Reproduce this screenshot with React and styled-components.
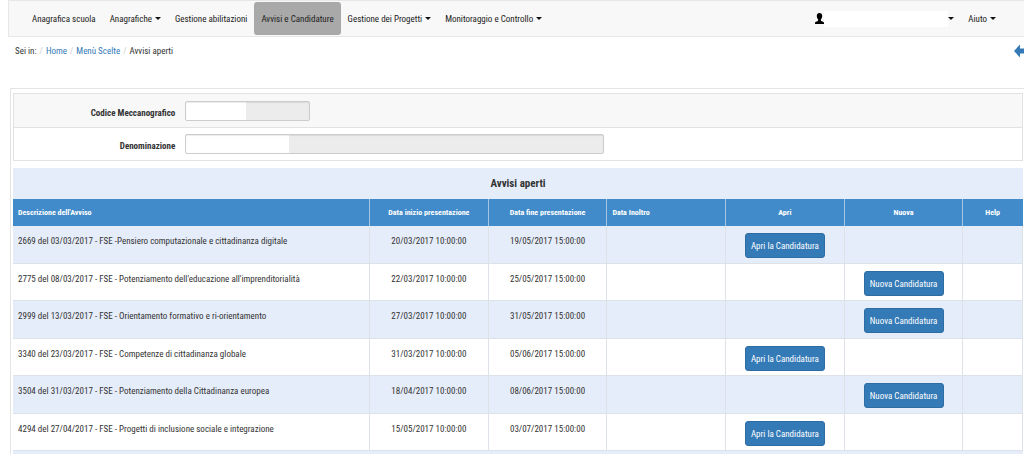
import React from 'react';
import styled, { createGlobalStyle } from 'styled-components';

const GlobalStyle = createGlobalStyle`
  * {
    box-sizing: border-box;
  }

  body {
    margin: 0;
    background: #fff;
    color: #333;
    font-family: 'Roboto Condensed', 'Liberation Sans', Arial, sans-serif;
    font-size: 9px;
    line-height: 14px;
    overflow-x: hidden;
  }

  button,
  input {
    font: inherit;
  }
`;

const NavBar = styled.nav`
  display: flex;
  justify-content: space-between;
  margin-left: 8px;
  padding: 1px 21px 1px 16px;
  background: #f8f8f8;
  border: 1px solid #e7e7e7;
  border-right: 0;
`;

const NavGroup = styled.div`
  display: flex;
  align-items: center;
`;

const navItem = `
  display: flex;
  align-items: center;
  gap: 3px;
  height: 33px;
  padding: 0 7px;
  border: 0;
  border-radius: 3px;
  color: #222;
  text-decoration: none;
  white-space: nowrap;
`;

const NavLink = styled.a`
  ${navItem}
  background: ${({ $active }) => ($active ? '#a9a9a9' : 'transparent')};
`;

const NavButton = styled.button`
  ${navItem}
  background: transparent;
  cursor: pointer;
`;

const Caret = styled.span`
  border-top: 3px solid #111;
  border-left: 3px solid transparent;
  border-right: 3px solid transparent;
`;

const UserButton = styled(NavButton)`
  gap: 0;
`;

const UserName = styled.span`
  width: 124px;
  height: 16px;
  background: #fff;
`;

const BreadcrumbBar = styled.div`
  display: flex;
  justify-content: space-between;
  align-items: center;
  height: 28px;
  padding-left: 15px;
`;

const Breadcrumb = styled.ol`
  display: flex;
  margin: 0;
  padding: 0;
  list-style: none;

  li + li::before {
    content: '/';
    padding: 0 3px;
    color: #ccc;
  }

  a {
    color: #337ab7;
    text-decoration: none;
  }
`;

const BackLink = styled.a`
  display: flex;
  margin-right: -2px;
`;

const Panel = styled.main`
  margin: 23px 0 0 10px;
  padding: 4px 1px 0 2px;
  border: 1px solid #e4e4e4;
  border-right: 0;
  border-bottom: 0;
`;

const Form = styled.form`
  margin-bottom: 7px;
  border: 1px solid #e2e2e2;
`;

const FormRow = styled.div`
  display: grid;
  grid-template-columns: 16% 1fr;
  align-items: center;
  column-gap: 10px;
  height: 33px;
  background: ${({ $shaded }) => ($shaded ? '#f8f8f8' : '#fff')};

  & + & {
    border-top: 1px solid #e2e2e2;
  }
`;

const Label = styled.label`
  padding-top: 4px;
  font-weight: bold;
  text-align: right;
`;

const ReadOnlyInput = styled.input`
  width: ${({ $width }) => $width};
  height: 20px;
  padding: 0 6px;
  border: 1px solid #ccc;
  border-radius: 2px;
  background: linear-gradient(#fff, #fff) no-repeat left / ${({ $blank }) => $blank} 100% #ececec;
  box-shadow: inset 0 1px 1px rgba(0, 0, 0, 0.08);
`;

const Table = styled.table`
  width: 100%;
  table-layout: fixed;
  border-collapse: separate;
  border-spacing: 0;
  border-bottom: 3px solid #e6edfa;
`;

const Caption = styled.caption`
  background: #e6edfa;
  font-size: 11px;
  font-weight: bold;
  line-height: 31px;
`;

const HeadCell = styled.th`
  width: ${({ $width }) => $width};
  height: 27px;
  padding: 0 5px;
  background: #428bca;
  border-right: 1px solid #a5c6e3;
  color: #fff;
  font-size: 8px;
  text-align: ${({ $align }) => $align || 'center'};

  &:last-child {
    border-right-color: #428bca;
  }
`;

const Row = styled.tr`
  height: 38px;
  background: #e6edfa;

  &:nth-child(even) {
    height: 37px;
    background: #fff;
  }
`;

const Cell = styled.td`
  padding: ${({ $action }) => ($action ? '7px 0 0' : '8px 5px 0')};
  border-right: 1px solid #dde1e8;
  border-bottom: 1px solid #dde1e8;
  text-align: ${({ $align }) => $align || 'center'};
  vertical-align: top;
`;

const ActionButton = styled.button`
  display: block;
  width: 80px;
  height: 25px;
  margin: 0 auto;
  padding: 0;
  border: 1px solid #2e6da4;
  border-radius: 3px;
  background: #337ab7;
  color: #fff;
  white-space: nowrap;
  cursor: pointer;
`;

const columns = [
  { label: "Descrizione dell'Avviso", width: '35.35%', align: 'left' },
  { label: 'Data inizio presentazione', width: '11.75%' },
  { label: 'Data fine presentazione', width: '11.75%' },
  { label: 'Data Inoltro', width: '11.75%', align: 'left' },
  { label: 'Apri', width: '11.75%' },
  { label: 'Nuova', width: '11.75%' },
  { label: 'Help', width: 'auto' },
];

const avvisi = [
  { title: '2669 del 03/03/2017 - FSE -Pensiero computazionale e cittadinanza digitale', start: '20/03/2017 10:00:00', end: '19/05/2017 15:00:00', open: true },
  { title: "2775 del 08/03/2017 - FSE - Potenziamento dell'educazione all'imprenditorialità", start: '22/03/2017 10:00:00', end: '25/05/2017 15:00:00', open: false },
  { title: '2999 del 13/03/2017 - FSE - Orientamento formativo e ri-orientamento', start: '27/03/2017 10:00:00', end: '31/05/2017 15:00:00', open: false },
  { title: '3340 del 23/03/2017 - FSE - Competenze di cittadinanza globale', start: '31/03/2017 10:00:00', end: '05/06/2017 15:00:00', open: true },
  { title: '3504 del 31/03/2017 - FSE - Potenziamento della Cittadinanza europea', start: '18/04/2017 10:00:00', end: '08/06/2017 15:00:00', open: false },
  { title: '4294 del 27/04/2017 - FSE - Progetti di inclusione sociale e integrazione', start: '15/05/2017 10:00:00', end: '03/07/2017 15:00:00', open: true },
];

const UserIcon = () => (
  <svg width="9" height="11" viewBox="0 0 9 11" fill="#000" aria-hidden="true">
    <path d="M4.5 0C6.3 0 7.2 1.1 7.2 2.9c0 1.5-.6 2.7-1.3 3.4v1c0 .4.2.7.7.9l1.500.5c.5.200.9.500.9 1V11H0V9.700c0-.5.4-.8.9-1l1.500-.5c.5-.2.7-.5.7-.9v-1C2.400 5.600 1.800 4.400 1.800 2.900 1.800 1.100 2.700 0 4.500 0z" />
  </svg>
);

const BackIcon = () => (
  <svg width="12" height="14" viewBox="0 0 12 14" fill="#337ab7" aria-hidden="true">
    <path d="M0 7L6 0.5V4.5H12V9.5H6V13.5Z" />
  </svg>
);

const App = () => {
  return (
    <>
      <GlobalStyle />
      <NavBar>
        <NavGroup>
          <NavLink href="#scuola">Anagrafica scuola</NavLink>
          <NavButton type="button">Anagrafiche <Caret /></NavButton>
          <NavLink href="#abilitazioni">Gestione abilitazioni</NavLink>
          <NavLink href="#avvisi" $active>Avvisi e Candidature</NavLink>
          <NavButton type="button">Gestione dei Progetti <Caret /></NavButton>
          <NavButton type="button">Monitoraggio e Controllo <Caret /></NavButton>
        </NavGroup>
        <NavGroup>
          <UserButton type="button" aria-label="Utente">
            <UserIcon />
            <UserName />
            <Caret />
          </UserButton>
          <NavButton type="button">Aiuto <Caret /></NavButton>
        </NavGroup>
      </NavBar>

      <BreadcrumbBar>
        <Breadcrumb>
          <li>Sei in:</li>
          <li><a href="#home">Home</a></li>
          <li><a href="#menu">Menù Scelte</a></li>
          <li>Avvisi aperti</li>
        </Breadcrumb>
        <BackLink href="#indietro" aria-label="Indietro">
          <BackIcon />
        </BackLink>
      </BreadcrumbBar>

      <Panel>
        <Form>
          <FormRow $shaded>
            <Label htmlFor="codice">Codice Meccanografico</Label>
            <ReadOnlyInput id="codice" type="text" readOnly $width="125px" $blank="60px" />
          </FormRow>
          <FormRow>
            <Label htmlFor="denominazione">Denominazione</Label>
            <ReadOnlyInput id="denominazione" type="text" readOnly $width="50%" $blank="103px" />
          </FormRow>
        </Form>

        <Table>
          <Caption>Avvisi aperti</Caption>
          <thead>
            <tr>
              {columns.map((col) => (
                <HeadCell key={col.label} scope="col" $width={col.width} $align={col.align}>
                  {col.label}
                </HeadCell>
              ))}
            </tr>
          </thead>
          <tbody>
            {avvisi.map((avviso) => (
              <Row key={avviso.title}>
                <Cell $align="left">{avviso.title}</Cell>
                <Cell>{avviso.start}</Cell>
                <Cell>{avviso.end}</Cell>
                <Cell />
                <Cell $action>
                  {avviso.open && <ActionButton type="button">Apri la Candidatura</ActionButton>}
                </Cell>
                <Cell $action>
                  {!avviso.open && <ActionButton type="button">Nuova Candidatura</ActionButton>}
                </Cell>
                <Cell />
              </Row>
            ))}
          </tbody>
        </Table>
      </Panel>
    </>
  );
};

export default App;
